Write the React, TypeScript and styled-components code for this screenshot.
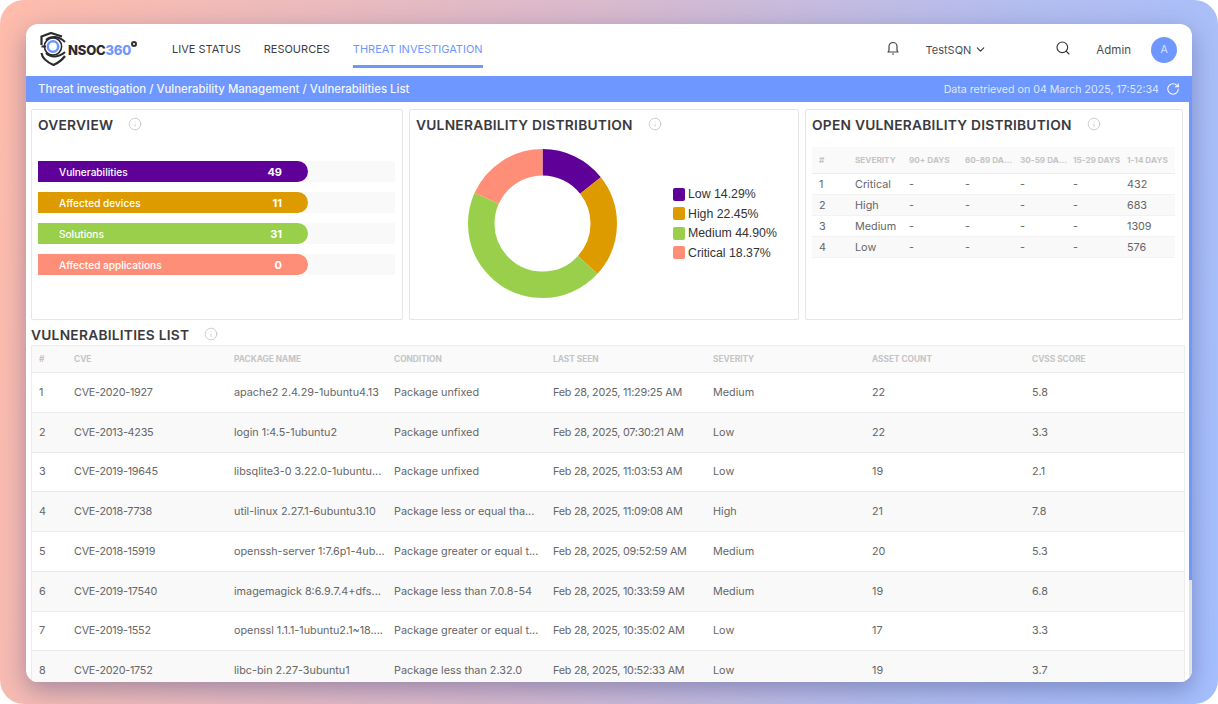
import React, { FC } from 'react';
import styled, { createGlobalStyle } from 'styled-components';
import { ChevronDown, Info, RotateCw, Search } from 'lucide-react';

const FONT = `Inter, "Open Sans", sans-serif`;

const GlobalStyle = createGlobalStyle`
  html, body {
    margin: 0;
    padding: 0;
    background: #fff;
    font-family: ${FONT};
  }
  * {
    box-sizing: border-box;
  }
`;

const Backdrop = styled.div`
  width: 1218px;
  height: 704px;
  padding: 24px 26px 22px;
  border-radius: 24px;
  overflow: hidden;
  background: linear-gradient(100deg, #ffbcab 0%, #d9b9cd 45%, #b4bdee 75%, #a5bffe 100%);
`;

const Window = styled.div`
  height: 658px;
  display: flex;
  flex-direction: column;
  background: #fff;
  border-radius: 12px;
  overflow: hidden;
  box-shadow: 0 8px 24px rgba(50, 60, 120, 0.4);
`;

const TopBar = styled.header`
  height: 52px;
  flex: none;
  display: flex;
  align-items: stretch;
  padding-left: 14px;
`;

const Logo = styled.div`
  width: 132px;
  display: flex;
  align-items: center;
  padding-bottom: 3px;
`;

const LogoText = styled.span`
  font-size: 13px;
  font-weight: 800;
  color: #2b2b2f;
  margin: 2px 0 0 -1px;
  letter-spacing: -0.2px;

  b {
    color: #6e97ff;
    font-weight: 800;
  }
`;

const LogoMark = styled.span`
  align-self: flex-start;
  width: 6px;
  height: 6px;
  margin: 17px 0 0 0;
  border-radius: 50%;
  border: 2px solid #333;
`;

const Nav = styled.nav`
  display: flex;
  gap: 23px;
`;

const NavItem = styled.a<{ $active?: boolean }>`
  padding-top: 18px;
  height: 44px;
  font-size: 11px;
  line-height: 15px;
  white-space: nowrap;
  color: ${(p) => (p.$active ? '#6e97ff' : '#3d3d42')};
  border-bottom: 3px solid ${(p) => (p.$active ? '#6e97ff' : 'transparent')};
`;

const TopRight = styled.div`
  margin-left: auto;
  display: flex;
  align-items: center;
  padding: 0 15px 1px 0;
  font-size: 11.5px;
  color: #4c4c50;
`;

const BellIcon = styled.svg`
  width: 14px;
  height: 14px;
  margin-bottom: 4px;
`;

const Tenant = styled.div`
  display: flex;
  align-items: center;
  gap: 3px;
  margin: 0 68px 0 26px;
  font-size: 11px;
`;

const SearchIcon = styled(Search)`
  margin-bottom: 4px;
`;

const AdminName = styled.span`
  margin: 0 20px 0 25px;
`;

const Avatar = styled.div`
  width: 26px;
  height: 26px;
  border-radius: 50%;
  background: #6e97ff;
  color: #d8e3ff;
  font-size: 10.5px;
  display: flex;
  align-items: center;
  justify-content: center;
`;

const Crumbs = styled.div`
  height: 26px;
  flex: none;
  display: flex;
  align-items: center;
  justify-content: space-between;
  padding: 0 12px;
  background: #6e97ff;
  color: #f2f5ff;
  font-size: 11.4px;
  font-weight: 500;
`;

const Retrieved = styled.div`
  display: flex;
  align-items: center;
  gap: 7px;
  font-weight: 400;
  color: #dfe7ff;
  font-size: 10.65px;
`;

const Body = styled.div`
  flex: 1;
  min-height: 0;
  display: flex;
`;

const Content = styled.main`
  flex: 1;
  min-width: 0;
  padding: 7px 4px 0 5px;
`;

const Scrollbar = styled.div`
  width: 3px;
  flex: none;
  display: flex;
  flex-direction: column;
  background: #e2e2e2;
`;

const ScrollThumb = styled.div`
  height: 478px;
  background: #6e97ff;
`;

const Cards = styled.section`
  display: grid;
  grid-template-columns: 372px 390px 378px;
  gap: 6px;
  height: 211px;
`;

const Card = styled.div`
  border: 1px solid #e6e6e6;
  border-radius: 2px;
  padding: 5px 6px 0;
  min-width: 0;
`;

const TitleRow = styled.div`
  display: flex;
  align-items: center;
  gap: 15px;
  height: 20px;
  color: #b5b5b5;

  svg {
    margin-bottom: 2px;
  }
`;

const Title = styled.h2`
  margin: 0;
  font-size: 13.75px;
  line-height: 20px;
  font-weight: 600;
  letter-spacing: 0.25px;
  color: #3a3a3e;
  white-space: nowrap;
`;

const Bars = styled.div`
  display: flex;
  flex-direction: column;
  gap: 10px;
  margin-top: 26px;
  padding-right: 1px;
`;

const BarTrack = styled.div`
  height: 21px;
  background: #f9f9f9;
`;

const BarFill = styled.div<{ $color: string }>`
  width: 270px;
  height: 21px;
  display: flex;
  align-items: center;
  justify-content: space-between;
  padding: 0 26px 0 21px;
  border-radius: 0 11px 11px 0;
  background: ${(p) => p.$color};
  color: #fff;
  font-size: 10.1px;
  font-weight: 500;

  b {
    font-size: 11px;
    font-weight: 700;
  }
`;

const DonutWrap = styled.div`
  display: flex;
  align-items: center;
  padding-left: 52px;
  margin-top: 14px;
`;

const Legend = styled.ul`
  list-style: none;
  margin: 0 0 0 56px;
  padding: 0;
  display: flex;
  flex-direction: column;
  gap: 5.5px;
  font-family: "Liberation Sans", Arial, sans-serif;
  font-size: 12.3px;
  color: #333;
`;

const LegendRow = styled.li`
  display: flex;
  align-items: center;
  gap: 3px;
  height: 14px;
  white-space: nowrap;
`;

const Swatch = styled.span<{ $color: string }>`
  width: 12px;
  height: 13px;
  border-radius: 2px;
  background: ${(p) => p.$color};
`;

const MiniTable = styled.div`
  margin: 12px 1px 0 0;
`;

const miniCols = '36px 54px 56px 55px 53px 54px 1fr';

const MiniHead = styled.div`
  display: grid;
  grid-template-columns: ${miniCols};
  align-items: center;
  height: 27px;
  padding-left: 7px;
  background: #fafafa;
  border-bottom: 1px solid #ececec;
  color: #c4c4c4;
  font-size: 8.2px;
  font-weight: 700;
  white-space: nowrap;
`;

const MiniRow = styled.div<{ $shade: boolean }>`
  display: grid;
  grid-template-columns: ${miniCols};
  align-items: center;
  height: 21px;
  padding-left: 7px;
  background: ${(p) => (p.$shade ? '#f9f9f9' : '#fff')};
  border-bottom: 1px solid #f2f2f2;
  color: #666;
  font-size: 10.8px;
`;

const ListTitle = styled(TitleRow)`
  margin-top: 5px;
`;

const listCols = '35px 160px 160px 159px 160px 159px 160px 1fr';

const ListHead = styled.div`
  display: grid;
  grid-template-columns: ${listCols};
  align-items: center;
  height: 28px;
  padding: 0 0 1px 7px;
  background: #fafafa;
  border: 1px solid #ececec;
  color: #c4c4c4;
  font-size: 8.3px;
  font-weight: 700;
`;

const ListRow = styled.div<{ $shade: boolean }>`
  display: grid;
  grid-template-columns: ${listCols};
  align-items: center;
  height: 39.75px;
  padding-left: 7px;
  background: ${(p) => (p.$shade ? '#f9f9f9' : '#fff')};
  border-left: 1px solid #ececec;
  border-right: 1px solid #ececec;
  border-bottom: 1px solid #e9e9e9;
  color: #666;
  font-size: 10.8px;
  white-space: nowrap;
`;

const Cell = styled.span<{ $tight?: boolean }>`
  letter-spacing: ${(p) => (p.$tight ? '-0.25px' : '0')};
`;

const Shield: FC = () => (
  <svg width="29" height="34" viewBox="0 0 29 34" fill="none">
    <path
      d="M1.5 13 V4.5 L11 1 L22 4.5 M1.5 21 C2 26 7 30 13.5 33 C18 31 22 28 25 24"
      stroke="#2b2b2f"
      strokeWidth="2.2"
    />
    <path d="M6 8 C11 3.5 19 4 25 10 M6 21 C11 26 19 25.5 25 20" stroke="#2b2b2f" strokeWidth="2" />
    <path d="M1.5 14.5 H6" stroke="#2b2b2f" strokeWidth="2" />
    <circle cx="13" cy="14.5" r="5.2" stroke="#6e97ff" strokeWidth="2.6" />
    <circle cx="13" cy="14.5" r="8.6" stroke="#2b2b2f" strokeWidth="1.6" />
  </svg>
);

const Bell: FC = () => (
  <BellIcon viewBox="0 0 14 14" fill="none" stroke="#444" strokeWidth="1.2">
    <path d="M3 9.5 V5.5 a4 4 0 0 1 8 0 V9.5 L12 11 H2 Z" strokeLinejoin="round" />
    <path d="M6 13 h2" />
  </BellIcon>
);

const Donut: FC = () => {
  const r = 61.25;
  const len = 2 * Math.PI * r;
  let used = 0;
  return (
    <svg width="149" height="149" viewBox="0 0 149 149">
      {chart.map((s) => {
        const part = (s.value / 100) * len;
        const el = (
          <circle
            key={s.label}
            cx="74.5"
            cy="74.5"
            r={r}
            fill="none"
            stroke={s.color}
            strokeWidth="26.5"
            strokeDasharray={`${part} ${len - part}`}
            strokeDashoffset={-used}
            transform="rotate(-90 74.5 74.5)"
          />
        );
        used += part;
        return el;
      })}
    </svg>
  );
};

const PURPLE = '#5f0099';
const AMBER = '#de9b00';
const GREEN = '#99cf4b';
const CORAL = '#ff8e78';

const overview = [
  { label: 'Vulnerabilities', value: 49, color: PURPLE },
  { label: 'Affected devices', value: 11, color: AMBER },
  { label: 'Solutions', value: 31, color: GREEN },
  { label: 'Affected applications', value: 0, color: CORAL },
];

const chart = [
  { label: 'Low', value: 14.29, color: PURPLE },
  { label: 'High', value: 22.45, color: AMBER },
  { label: 'Medium', value: 44.9, color: GREEN },
  { label: 'Critical', value: 18.37, color: CORAL },
];

const openRows = [
  ['Critical', '432'],
  ['High', '683'],
  ['Medium', '1309'],
  ['Low', '576'],
];

const miniHead = ['#', 'SEVERITY', '90+ DAYS', '60-89 DA...', '30-59 DA...', '15-29 DAYS', '1-14 DAYS'];
const listHead = ['#', 'CVE', 'PACKAGE NAME', 'CONDITION', 'LAST SEEN', 'SEVERITY', 'ASSET COUNT', 'CVSS SCORE'];

const vulns = [
  ['CVE-2020-1927', 'apache2 2.4.29-1ubuntu4.13', 'Package unfixed', 'Feb 28, 2025, 11:29:25 AM', 'Medium', '22', '5.8'],
  ['CVE-2013-4235', 'login 1:4.5-1ubuntu2', 'Package unfixed', 'Feb 28, 2025, 07:30:21 AM', 'Low', '22', '3.3'],
  ['CVE-2019-19645', 'libsqlite3-0 3.22.0-1ubuntu...', 'Package unfixed', 'Feb 28, 2025, 11:03:53 AM', 'Low', '19', '2.1'],
  ['CVE-2018-7738', 'util-linux 2.27.1-6ubuntu3.10', 'Package less or equal tha...', 'Feb 28, 2025, 11:09:08 AM', 'High', '21', '7.8'],
  ['CVE-2018-15919', 'openssh-server 1:7.6p1-4ub...', 'Package greater or equal t...', 'Feb 28, 2025, 09:52:59 AM', 'Medium', '20', '5.3'],
  ['CVE-2019-17540', 'imagemagick 8:6.9.7.4+dfs...', 'Package less than 7.0.8-54', 'Feb 28, 2025, 10:33:59 AM', 'Medium', '19', '6.8'],
  ['CVE-2019-1552', 'openssl 1.1.1-1ubuntu2.1~18....', 'Package greater or equal t...', 'Feb 28, 2025, 10:35:02 AM', 'Low', '17', '3.3'],
  ['CVE-2020-1752', 'libc-bin 2.27-3ubuntu1', 'Package less than 2.32.0', 'Feb 28, 2025, 10:52:33 AM', 'Low', '19', '3.7'],
];

const App: FC = () => (
  <>
    <GlobalStyle />
    <Backdrop>
      <Window>
        <TopBar>
          <Logo>
            <Shield />
            <LogoText>
              NSOC<b>360</b>
            </LogoText>
            <LogoMark />
          </Logo>
          <Nav>
            <NavItem>LIVE STATUS</NavItem>
            <NavItem>RESOURCES</NavItem>
            <NavItem $active>THREAT INVESTIGATION</NavItem>
          </Nav>
          <TopRight>
            <Bell />
            <Tenant>
              TestSQN <ChevronDown size={13} strokeWidth={2} color="#333" />
            </Tenant>
            <SearchIcon size={16} strokeWidth={1.7} color="#333" />
            <AdminName>Admin</AdminName>
            <Avatar>A</Avatar>
          </TopRight>
        </TopBar>
        <Crumbs>
          <span>Threat investigation / Vulnerability Management / Vulnerabilities List</span>
          <Retrieved>
            Data retrieved on 04 March 2025, 17:52:34
            <RotateCw size={14} strokeWidth={1.8} color="#fff" />
          </Retrieved>
        </Crumbs>
        <Body>
          <Content>
            <Cards>
              <Card>
                <TitleRow>
                  <Title>OVERVIEW</Title>
                  <Info size={14} strokeWidth={1.1} />
                </TitleRow>
                <Bars>
                  {overview.map((b) => (
                    <BarTrack key={b.label}>
                      <BarFill $color={b.color}>
                        <span>{b.label}</span>
                        <b>{b.value}</b>
                      </BarFill>
                    </BarTrack>
                  ))}
                </Bars>
              </Card>
              <Card>
                <TitleRow>
                  <Title>VULNERABILITY DISTRIBUTION</Title>
                  <Info size={14} strokeWidth={1.1} />
                </TitleRow>
                <DonutWrap>
                  <Donut />
                  <Legend>
                    {chart.map((s) => (
                      <LegendRow key={s.label}>
                        <Swatch $color={s.color} />
                        {s.label} {s.value.toFixed(2)}%
                      </LegendRow>
                    ))}
                  </Legend>
                </DonutWrap>
              </Card>
              <Card>
                <TitleRow>
                  <Title>OPEN VULNERABILITY DISTRIBUTION</Title>
                  <Info size={14} strokeWidth={1.1} />
                </TitleRow>
                <MiniTable>
                  <MiniHead>
                    {miniHead.map((h) => (
                      <span key={h}>{h}</span>
                    ))}
                  </MiniHead>
                  {openRows.map((row, i) => (
                    <MiniRow key={row[0]} $shade={i % 2 === 1}>
                      <span>{i + 1}</span>
                      <span>{row[0]}</span>
                      <span>-</span>
                      <span>-</span>
                      <span>-</span>
                      <span>-</span>
                      <span>{row[1]}</span>
                    </MiniRow>
                  ))}
                </MiniTable>
              </Card>
            </Cards>
            <ListTitle>
              <Title>VULNERABILITIES LIST</Title>
              <Info size={14} strokeWidth={1.1} />
            </ListTitle>
            <ListHead>
              {listHead.map((h) => (
                <span key={h}>{h}</span>
              ))}
            </ListHead>
            {vulns.map((row, i) => (
              <ListRow key={row[0]} $shade={i % 2 === 1}>
                <span>{i + 1}</span>
                {row.map((cell, j) => (
                  <Cell key={j} $tight={j === 0 || j === 3}>
                    {cell}
                  </Cell>
                ))}
              </ListRow>
            ))}
          </Content>
          <Scrollbar>
            <ScrollThumb />
          </Scrollbar>
        </Body>
      </Window>
    </Backdrop>
  </>
);

export default App;
